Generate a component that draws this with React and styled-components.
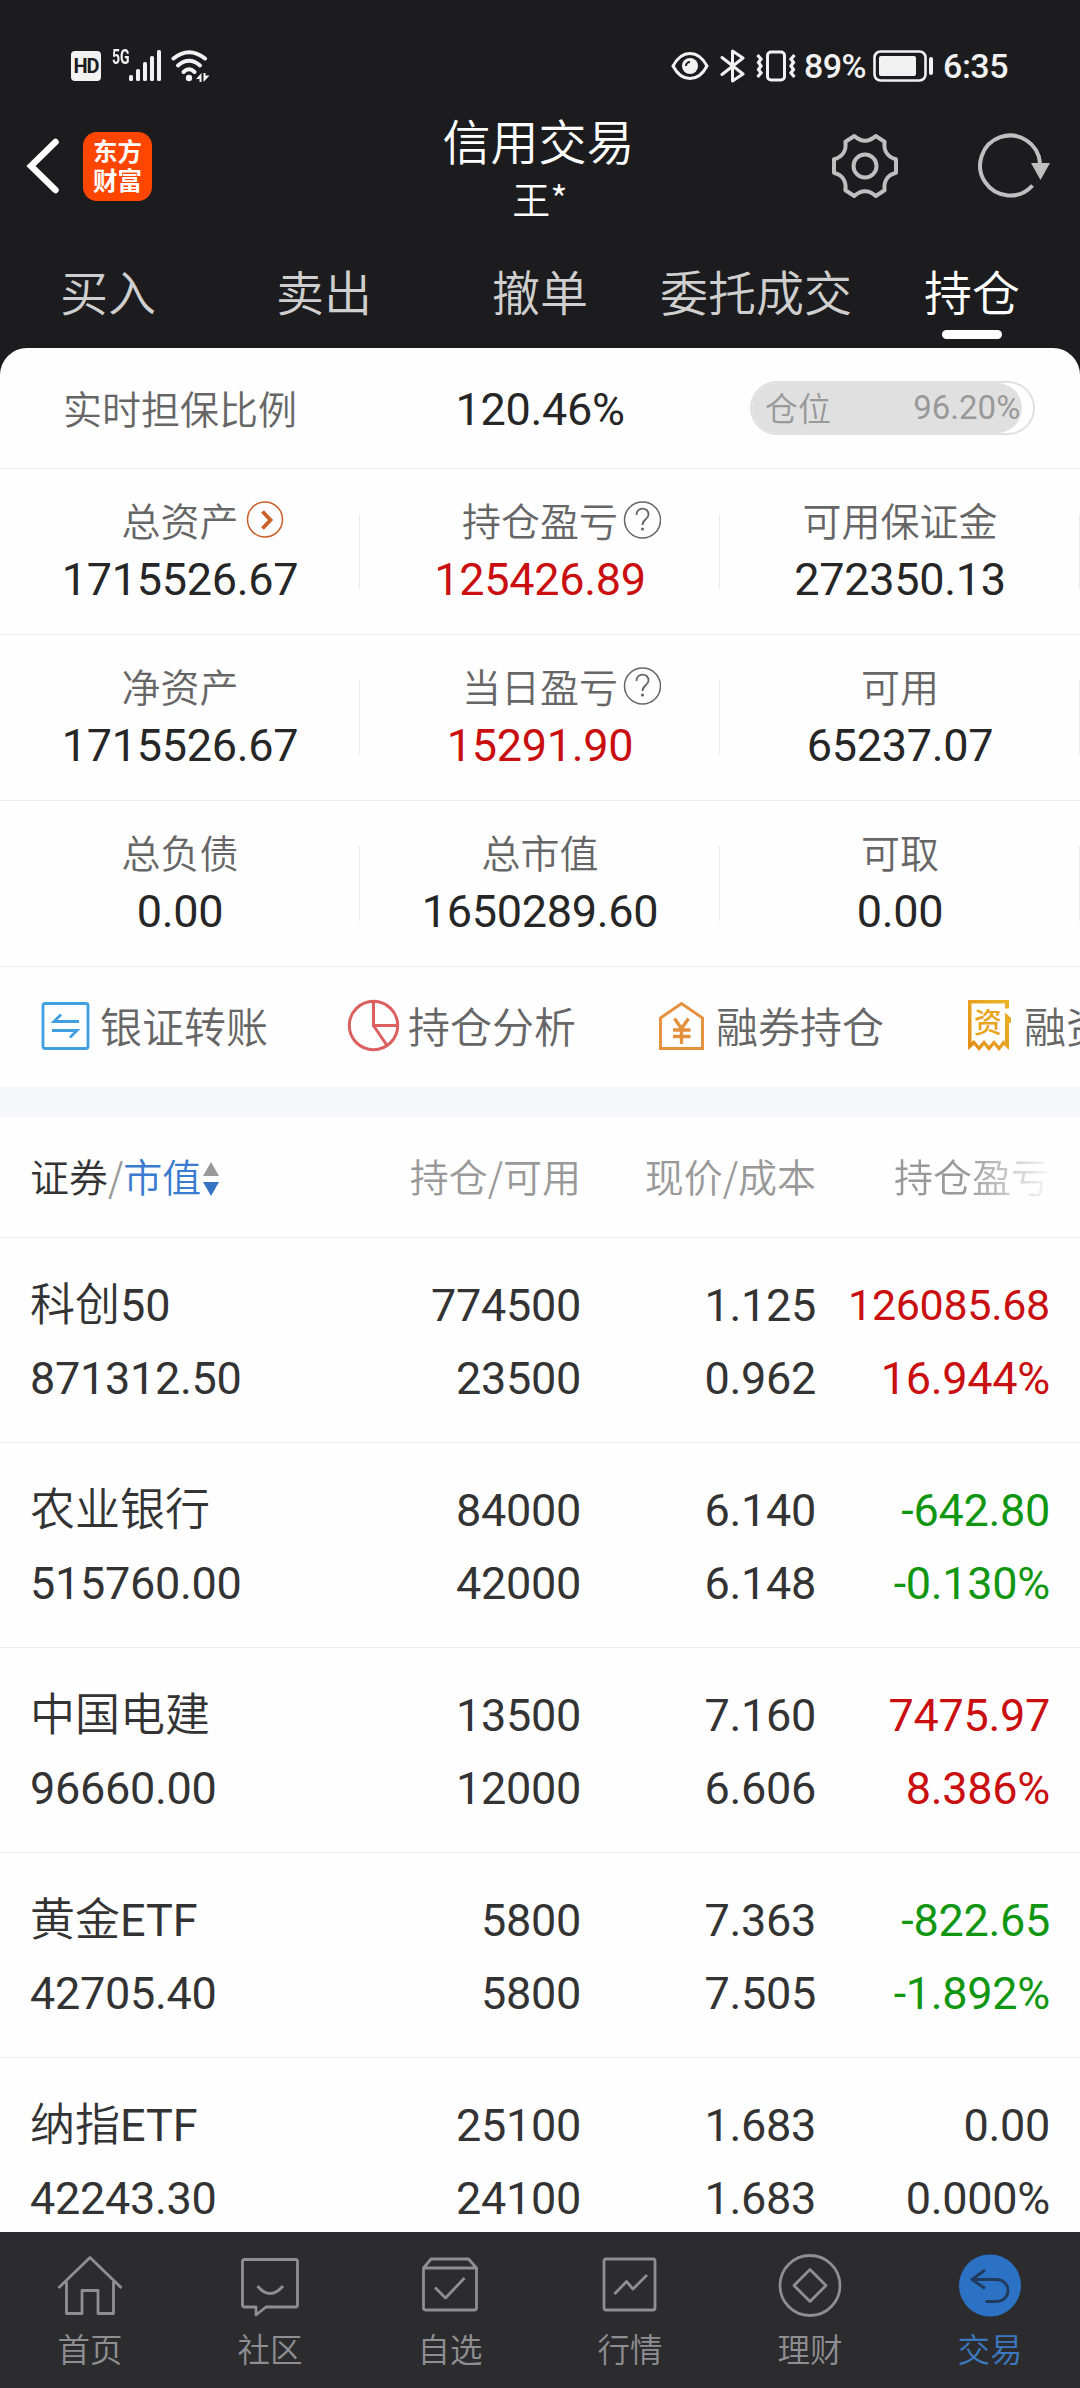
import React from "react";
import styled, { createGlobalStyle, css } from "styled-components";

const GlobalStyle = createGlobalStyle`
  * { box-sizing: border-box; }
  body {
    margin: 0;
    background: #1c1c1e;
    font-family: Roboto, "Noto Sans CJK SC", sans-serif;
    -webkit-font-smoothing: antialiased;
  }
  svg { display: block; flex: none; }
`;

/* Chinese text sits between light and regular; digits stay in Roboto regular. */
const cjk = css`
  font-family: "Noto Sans CJK SC DemiLight", "Noto Sans CJK SC", sans-serif;
  font-weight: 350;
`;

const Screen = styled.div`
  width: 1080px;
  height: 2388px;
  display: flex;
  flex-direction: column;
  background: #1c1c1e;
  overflow: hidden;
`;

const StatusBar = styled.div`
  height: 100px;
  padding: 31px 72px 0 71px;
  display: flex;
  justify-content: space-between;
  align-items: center;
  color: #f2f2f2;
`;

const StatusGroup = styled.div`
  display: flex;
  align-items: center;
  height: 34px;
`;

const HdBadge = styled.span`
  width: 30px;
  height: 30px;
  border-radius: 4px;
  background: #f2f2f2;
  color: #1c1c1e;
  font-size: 20px;
  font-weight: 700;
  line-height: 31px;
  text-align: center;
  letter-spacing: -1px;
`;

const NetworkType = styled.span`
  align-self: flex-start;
  margin-left: 11px;
  width: 17px;
  font-size: 20px;
  line-height: 17px;
  font-weight: 700;
  transform: scaleX(0.7);
  transform-origin: left;
`;

const StatusText = styled.span`
  font-size: 34px;
  line-height: 34px;
  font-weight: 500;
  letter-spacing: -0.5px;
  margin-left: ${(p) => p.$gap}px;
`;

const Header = styled.header`
  height: 140px;
  display: grid;
  grid-template-columns: 360px 360px 360px;
`;

const HeaderStart = styled.div`
  display: flex;
  align-items: center;
  padding: 0 0 8px 26px;
  gap: 23px;
`;

const Logo = styled.div`
  width: 69px;
  height: 69px;
  border-radius: 14px;
  background: #ff4600;
  color: #fff;
  display: flex;
  flex-direction: column;
  align-items: center;
  justify-content: center;
  font: 700 24.5px/29px "Noto Sans CJK SC", sans-serif;
  padding-bottom: 3px;
`;

const Titles = styled.div`
  display: flex;
  flex-direction: column;
  align-items: center;
  color: #fff;
`;

const Title = styled.h1`
  ${cjk}
  margin: 9px 3px 0 0;
  font-size: 48px;
  line-height: 60px;
`;

const Subtitle = styled.div`
  ${cjk}
  margin-top: 5px;
  font-size: 38px;
  line-height: 48px;
`;

const HeaderEnd = styled.div`
  display: flex;
  justify-content: flex-end;
  align-items: center;
  gap: 74px;
  padding: 0 29px 8px 0;
`;

const Tabs = styled.nav`
  height: 108px;
  display: grid;
  grid-template-columns: repeat(5, 1fr);
`;

const Tab = styled.div`
  ${cjk}
  display: flex;
  flex-direction: column;
  align-items: center;
  padding-top: 15px;
  font-size: 48px;
  line-height: 70px;
  color: ${(p) => (p.$active ? "#fff" : "#cfcfcf")};
  &::after {
    content: "";
    width: 60px;
    height: 9px;
    margin-top: 5px;
    border-radius: 5px;
    background: ${(p) => (p.$active ? "#fff" : "transparent")};
  }
`;

const Sheet = styled.main`
  flex: 1;
  min-height: 0;
  overflow: hidden;
  background: #fefefe;
  border-radius: 27px 27px 0 0;
`;

const Label = styled.div`
  ${cjk}
  position: relative;
  font-size: 39px;
  line-height: 50px;
  color: #666;
`;

const RatioRow = styled.section`
  height: 121px;
  padding-top: 3px;
  display: grid;
  grid-template-columns: repeat(3, 1fr);
  align-items: center;
  justify-items: center;
  border-bottom: 1px solid #ececec;
  ${Label} { margin-bottom: 5px; }
`;

const Value = styled.div`
  font-size: 45px;
  line-height: 54px;
  letter-spacing: -0.3px;
  color: ${(p) => (p.$up ? "#c90f0f" : "#262626")};
`;

const Pill = styled.div`
  width: 285px;
  height: 54px;
  margin: 0 45px 3px auto;
  border: 2px solid #e0e0e0;
  border-radius: 27px;
  overflow: hidden;
`;

const PillFill = styled.div`
  height: 100%;
  padding: 0 2px 0 13px;
  border-radius: 0 25px 25px 0;
  background: #e0e0e0;
  color: #999;
  display: flex;
  align-items: center;
  justify-content: space-between;
  font-size: 33px;
  line-height: 50px;
`;

const PillLabel = styled.span`
  ${cjk}
  padding-bottom: 2px;
`;

const StatRow = styled.section`
  height: 166px;
  display: grid;
  grid-template-columns: repeat(3, 1fr);
  border-bottom: 1px solid #ececec;
`;

const Stat = styled.div`
  display: flex;
  flex-direction: column;
  align-items: center;
  padding-top: 25px;
  background: linear-gradient(#ececec, #ececec) right 45px / 1px 75px no-repeat;
  ${Value} { margin-top: 9px; }
`;

const LabelIcon = styled.span`
  position: absolute;
  left: calc(100% + 3px);
  top: 7px;
`;

const Shortcuts = styled.section`
  height: 120px;
  display: flex;
  padding: 0 0 2px 35px;
  overflow: hidden;
`;

const Shortcut = styled.div`
  ${cjk}
  flex: none;
  width: 308px;
  display: flex;
  align-items: center;
  gap: 5px;
  font-size: 42px;
  color: #666;
  white-space: nowrap;
`;

const ShortcutText = styled.span`
  padding-bottom: 3px;
`;

const Band = styled.div`
  height: 30px;
  background: #f6f7fa;
`;

const columns = css`
  display: grid;
  grid-template-columns: 281px 270px 235px 234px;
  padding: 0 30px;
  border-bottom: 1px solid #ececec;
`;

const TableHead = styled.div`
  ${columns}
  ${cjk}
  height: 121px;
  padding-bottom: 4px;
  align-items: center;
  font-size: 39px;
  line-height: 50px;
  color: #999;
  text-align: right;
`;

const SortHead = styled.div`
  display: flex;
  align-items: center;
  b { font-weight: inherit; color: #333; }
  em { font-style: normal; color: #3a7bd0; }
  svg { margin: 7px 0 0 1px; }
`;

const FadingHead = styled.div`
  mask-image: linear-gradient(90deg, #000 64%, transparent 102%);
`;

const Holding = styled.div`
  ${columns}
  height: 205px;
  padding-top: 31px;
`;

const Pair = styled.div`
  display: flex;
  flex-direction: column;
  align-items: ${(p) => (p.$start ? "flex-start" : "flex-end")};
  font-size: 45px;
  line-height: 73px;
  letter-spacing: -0.3px;
  color: ${(p) => ({ up: "#c90f0f", down: "#119611" }[p.$trend] || "#333")};
  white-space: nowrap;
`;

const Name = styled.span`
  font-family: Roboto, "Noto Sans CJK SC DemiLight", "Noto Sans CJK SC", sans-serif;
  letter-spacing: 0;
`;

const Figure = styled.span`
  font-size: ${(p) => (p.$long ? 43 : 45)}px;
`;

const BottomNav = styled.nav`
  height: 156px;
  flex: none;
  display: grid;
  grid-template-columns: repeat(6, 1fr);
  background: #2c2c2e;
`;

const NavItem = styled.div`
  ${cjk}
  display: flex;
  flex-direction: column;
  align-items: center;
  padding-top: 20px;
  gap: 7px;
  font-size: 32.5px;
  line-height: 46px;
  color: ${(p) => (p.$active ? "#3b78bf" : "#8e8e93")};
`;

const SpacedSvg = styled.svg`
  margin-left: ${(p) => p.$gap}px;
`;

const Signal = () => (
  <svg width="33" height="32" viewBox="0 0 33 32" fill="#f2f2f2">
    <rect x="0" y="25" width="4" height="6" rx="1.5" />
    <rect x="7" y="19" width="4" height="12" rx="1.5" />
    <rect x="14" y="12" width="4" height="19" rx="1.5" />
    <rect x="21" y="6" width="4" height="25" rx="1.5" />
    <rect x="28" y="0" width="4" height="31" rx="1.5" />
  </svg>
);

const Wifi = () => (
  <SpacedSvg $gap={9} width="39" height="32" viewBox="0 0 39 32" fill="none" stroke="#f2f2f2" strokeWidth="4" strokeLinecap="round">
    <path d="M2.5 8.5Q18 -4 34 8.5" />
    <path d="M7 15.5Q18 6 29 15.5" />
    <path d="M12.500 22Q18 16.500 23.500 22" />
    <circle cx="18" cy="28" r="3.200" fill="#f2f2f2" stroke="none" />
    <path d="M30.500 23v9h-2v-3h-3.500zM32.500 23v9l6-6.500h-4v-2.500z" fill="#f2f2f2" stroke="none" />
  </SpacedSvg>
);

const Eye = () => (
  <svg width="38" height="32" viewBox="0 0 38 32" fill="none" stroke="#f2f2f2" strokeWidth="3">
    <path d="M2 16C7 6.500 13 3.500 19 3.500S31 6.500 36 16C31 25.500 25 28.500 19 28.500S7 25.500 2 16Z" />
    <circle cx="19" cy="16" r="8" fill="#f2f2f2" stroke="none" />
    <path d="M15 16a4 4 0 0 1 4-4" stroke="#1c1c1e" strokeWidth="2" />
  </svg>
);

const Bluetooth = () => (
  <SpacedSvg $gap={11} width="26" height="34" viewBox="0 0 26 34" fill="none" stroke="#f2f2f2" strokeWidth="3" strokeLinejoin="round" strokeLinecap="round">
    <path d="M2 8.500L23 25L12.500 32V2L23 9L2 25.500" />
  </SpacedSvg>
);

const Vibrate = () => (
  <SpacedSvg $gap={10} width="40" height="32" viewBox="0 0 40 32" fill="none" stroke="#f2f2f2" strokeWidth="3">
    <rect x="11.500" y="2" width="17" height="28" rx="3.500" />
    <path d="M1.500 5l3.500 4-2.500 3.500 2.500 3.500-2.500 3.500 2.500 3.500-3.500 4M38.500 5l-3.500 4 2.500 3.500-2.500 3.500 2.500 3.500-2.500 3.500 3.500 4" strokeWidth="3.200" />
  </SpacedSvg>
);

const Battery = () => (
  <SpacedSvg $gap={7} width="61" height="32" viewBox="0 0 61 32">
    <rect x="1.500" y="1.500" width="51" height="29" rx="6" fill="none" stroke="#f2f2f2" strokeWidth="2.600" />
    <rect x="6" y="6" width="37" height="20" rx="2" fill="#f2f2f2" />
    <rect x="56" y="7" width="4" height="18" rx="2" fill="#f2f2f2" />
  </SpacedSvg>
);

const Back = () => (
  <svg width="34" height="60" viewBox="0 0 34 60" fill="none" stroke="#fff" strokeWidth="6.500" strokeLinecap="round">
    <path d="M29.500 6L5 30L29.500 54" />
  </svg>
);

const Gear = () => (
  <svg width="72" height="72" viewBox="0 0 72 72" fill="none" stroke="#bfbfbf" strokeWidth="4" strokeLinejoin="round">
    <path d="M25.300 6Q36 15.500 46.700 6L55.600 11.700C54.500 20 58 27 67 29.300V42.700C58 45 54.500 52 55.600 60.300L46.700 66Q36 56.500 25.300 66L16.400 60.300C17.500 52 14 45 5 42.700V29.300C14 27 17.500 20 16.400 11.700Z" />
    <circle cx="36" cy="36" r="11.500" />
  </svg>
);

const Refresh = () => (
  <svg width="76" height="72" viewBox="0 0 76 72" fill="none" stroke="#bfbfbf" strokeWidth="4">
    <path d="M65 33A30 30 0 1 0 57.500 55.500" />
    <path d="M56 33H75L65.500 50Z" fill="#bfbfbf" stroke="none" />
  </svg>
);

const ArrowCircle = () => (
  <svg width="44" height="38" viewBox="0 0 44 38" fill="none" stroke="#c9602a">
    <circle cx="23" cy="18.500" r="17.500" strokeWidth="1.500" />
    <path d="M20.500 10.500L28.500 19L20.500 27.500" strokeWidth="3.800" />
  </svg>
);

const QuestionCircle = () => (
  <svg width="40" height="40" viewBox="0 0 40 40" fill="none" stroke="#666" strokeWidth="1.500">
    <circle cx="21.500" cy="19" r="18" />
    <path d="M15.500 14C15.500 5.500 27.500 5.500 27.500 13.500C27.500 18.500 21.500 18 21.500 24" strokeWidth="1.800" />
    <circle cx="21.500" cy="28" r="1.600" fill="#666" stroke="none" />
  </svg>
);

const Transfer = () => (
  <svg width="60" height="60" viewBox="0 0 60 60" fill="none" stroke="#3f9fe0">
    <rect x="8" y="7.500" width="45" height="45" rx="2" strokeWidth="2.800" />
    <path d="M44 25.500H19L26 18.500M17 34.500H42L35 41.500" strokeWidth="2.800" />
  </svg>
);

const Pie = () => (
  <svg width="60" height="60" viewBox="0 0 60 60" fill="none" stroke="#dc5f5f" strokeWidth="3">
    <circle cx="30.500" cy="29.500" r="24.200" />
    <path d="M30.500 5.500V29.500H54.500M30.500 29.500L44 49.500" />
  </svg>
);

const House = () => (
  <svg width="60" height="60" viewBox="0 0 60 60" fill="none" stroke="#e5903c" strokeWidth="2.900">
    <path d="M9.500 52.500V22L30.500 7.500L51.500 22V52.500Z" />
    <path d="M23.500 22.500L30.500 32.500L37.500 22.500M22 34H39.500M22 40.500H39.500M30.500 32V48" strokeWidth="3.300" />
  </svg>
);

const ReceiptBox = styled.span`
  display: grid;
  width: 60px;
  height: 60px;
  > * { grid-area: 1 / 1; }
`;

const ReceiptMark = styled.span`
  font-family: "Noto Sans CJK SC", sans-serif;
  font-size: 28px;
  line-height: 28px;
  font-weight: 500;
  color: #e9a41c;
  margin: 11px 0 0 15px;
`;

const Receipt = () => (
  <ReceiptBox>
    <svg width="60" height="60" viewBox="0 0 60 60" fill="none">
      <defs>
        <linearGradient id="gold" x1="0" y1="1" x2="1" y2="0">
          <stop offset="0" stopColor="#e38c18" />
          <stop offset="1" stopColor="#ecb627" />
        </linearGradient>
      </defs>
      <path fill="url(#gold)" d="M9 4H50V12.500H46V7.500H12.500V46L15 44L20 50L25 44L30 50L35 44L40 50L44.500 44L46 46V16.500L52 22V27H50V54L45 49L40 55L35 49L30 55L25 49L20 55L15 49L9 54Z" />
    </svg>
    <ReceiptMark>资</ReceiptMark>
  </ReceiptBox>
);

const Sort = () => (
  <svg width="18" height="36" viewBox="0 0 18 36">
    <path d="M1 15L9 1L17 15Z" fill="#999" />
    <path d="M1 21L9 35L17 21Z" fill="#3373c4" />
  </svg>
);

const NavSvg = ({ children }) => (
  <svg width="66" height="66" viewBox="0 0 66 66" fill="none" stroke="#8e8e93" strokeWidth="2.800" strokeLinejoin="round">
    {children}
  </svg>
);

const navItems = [
  ["首页", <><path d="M1.500 36L33 5.500L64.500 36" /><path d="M9.500 29.500V61.500H25V38.500H41V61.500H56.500V29.500" /></>],
  ["社区", <><path d="M7.500 7.500H58.500Q60.500 7.500 60.500 9.500V53Q60.500 55 58.500 55H29L19 63V55H7.500Q5.500 55 5.500 53V9.500Q5.500 7.500 7.500 7.500Z" /><path d="M20.500 34Q33 49 46 34" strokeWidth="3" /></>],
  ["自选", <><path d="M6.500 16L14 7H51.500L59.500 16V56Q59.500 58 57 58H9Q6.500 58 6.500 56ZM6.500 16H59.500" /><path d="M18 35.500L28.500 46L47.500 26" /></>],
  ["行情", <><rect x="7" y="7" width="51" height="51" rx="2" /><path d="M17.500 42L29.500 29.500L36 37L50 23" /></>],
  ["理财", <><circle cx="33" cy="33.500" r="30" /><path d="M33 17.500L49 33.500L33 49.500L17 33.500Z" /></>],
  ["交易", <><circle cx="33" cy="33.500" r="31" fill="#2b72c5" stroke="none" /><path d="M28 18L15 27.500L28 36.500M15 27.500H39C55 27.500 55 49.500 39 49.500H28.500" stroke="#1f3a5c" strokeWidth="2.800" /></>],
];

const stats = [
  [
    { label: "总资产", value: "1715526.67", icon: <ArrowCircle /> },
    { label: "持仓盈亏", value: "125426.89", icon: <QuestionCircle />, up: true },
    { label: "可用保证金", value: "272350.13" },
  ],
  [
    { label: "净资产", value: "1715526.67" },
    { label: "当日盈亏", value: "15291.90", icon: <QuestionCircle />, up: true },
    { label: "可用", value: "65237.07" },
  ],
  [
    { label: "总负债", value: "0.00" },
    { label: "总市值", value: "1650289.60" },
    { label: "可取", value: "0.00" },
  ],
];

const holdings = [
  { name: "科创50", worth: "871312.50", held: "774500", free: "23500", price: "1.125", cost: "0.962", profit: "126085.68", rate: "16.944%", trend: "up" },
  { name: "农业银行", worth: "515760.00", held: "84000", free: "42000", price: "6.140", cost: "6.148", profit: "-642.80", rate: "-0.130%", trend: "down" },
  { name: "中国电建", worth: "96660.00", held: "13500", free: "12000", price: "7.160", cost: "6.606", profit: "7475.97", rate: "8.386%", trend: "up" },
  { name: "黄金ETF", worth: "42705.40", held: "5800", free: "5800", price: "7.363", cost: "7.505", profit: "-822.65", rate: "-1.892%", trend: "down" },
  { name: "纳指ETF", worth: "42243.30", held: "25100", free: "24100", price: "1.683", cost: "1.683", profit: "0.00", rate: "0.000%" },
];

const tabs = ["买入", "卖出", "撤单", "委托成交", "持仓"];

export default function App() {
  return (
    <Screen>
      <GlobalStyle />
      <StatusBar>
        <StatusGroup>
          <HdBadge>HD</HdBadge>
          <NetworkType>5G</NetworkType>
          <Signal />
          <Wifi />
        </StatusGroup>
        <StatusGroup>
          <Eye />
          <Bluetooth />
          <Vibrate />
          <StatusText $gap={8}>89%</StatusText>
          <Battery />
          <StatusText $gap={9}>6:35</StatusText>
        </StatusGroup>
      </StatusBar>

      <Header>
        <HeaderStart>
          <Back />
          <Logo>
            <span>东方</span>
            <span>财富</span>
          </Logo>
        </HeaderStart>
        <Titles>
          <Title>信用交易</Title>
          <Subtitle>王*</Subtitle>
        </Titles>
        <HeaderEnd>
          <Gear />
          <Refresh />
        </HeaderEnd>
      </Header>

      <Tabs>
        {tabs.map((t) => (
          <Tab key={t} $active={t === "持仓"}>{t}</Tab>
        ))}
      </Tabs>

      <Sheet>
        <RatioRow>
          <Label>实时担保比例</Label>
          <Value>120.46%</Value>
          <Pill>
            <PillFill style={{ width: "96.2%" }}>
              <PillLabel>仓位</PillLabel>
              <span>96.20%</span>
            </PillFill>
          </Pill>
        </RatioRow>

        {stats.map((row) => (
          <StatRow key={row[0].label}>
            {row.map((s) => (
              <Stat key={s.label}>
                <Label>
                  {s.label}
                  {s.icon && <LabelIcon>{s.icon}</LabelIcon>}
                </Label>
                <Value $up={s.up}>{s.value}</Value>
              </Stat>
            ))}
          </StatRow>
        ))}

        <Shortcuts>
          <Shortcut><Transfer /><ShortcutText>银证转账</ShortcutText></Shortcut>
          <Shortcut><Pie /><ShortcutText>持仓分析</ShortcutText></Shortcut>
          <Shortcut><House /><ShortcutText>融券持仓</ShortcutText></Shortcut>
          <Shortcut><Receipt /><ShortcutText>融资持仓</ShortcutText></Shortcut>
        </Shortcuts>

        <Band />

        <TableHead>
          <SortHead><b>证券</b>/<em>市值</em><Sort /></SortHead>
          <div>持仓/可用</div>
          <div>现价/成本</div>
          <FadingHead>持仓盈亏</FadingHead>
        </TableHead>

        {holdings.map((h) => (
          <Holding key={h.name}>
            <Pair $start><Name>{h.name}</Name><span>{h.worth}</span></Pair>
            <Pair><span>{h.held}</span><span>{h.free}</span></Pair>
            <Pair><span>{h.price}</span><span>{h.cost}</span></Pair>
            <Pair $trend={h.trend}>
              <Figure $long={h.profit.length > 8}>{h.profit}</Figure>
              <Figure>{h.rate}</Figure>
            </Pair>
          </Holding>
        ))}
      </Sheet>

      <BottomNav>
        {navItems.map(([label, drawing]) => (
          <NavItem key={label} $active={label === "交易"}>
            <NavSvg>{drawing}</NavSvg>
            <span>{label}</span>
          </NavItem>
        ))}
      </BottomNav>
    </Screen>
  );
}
